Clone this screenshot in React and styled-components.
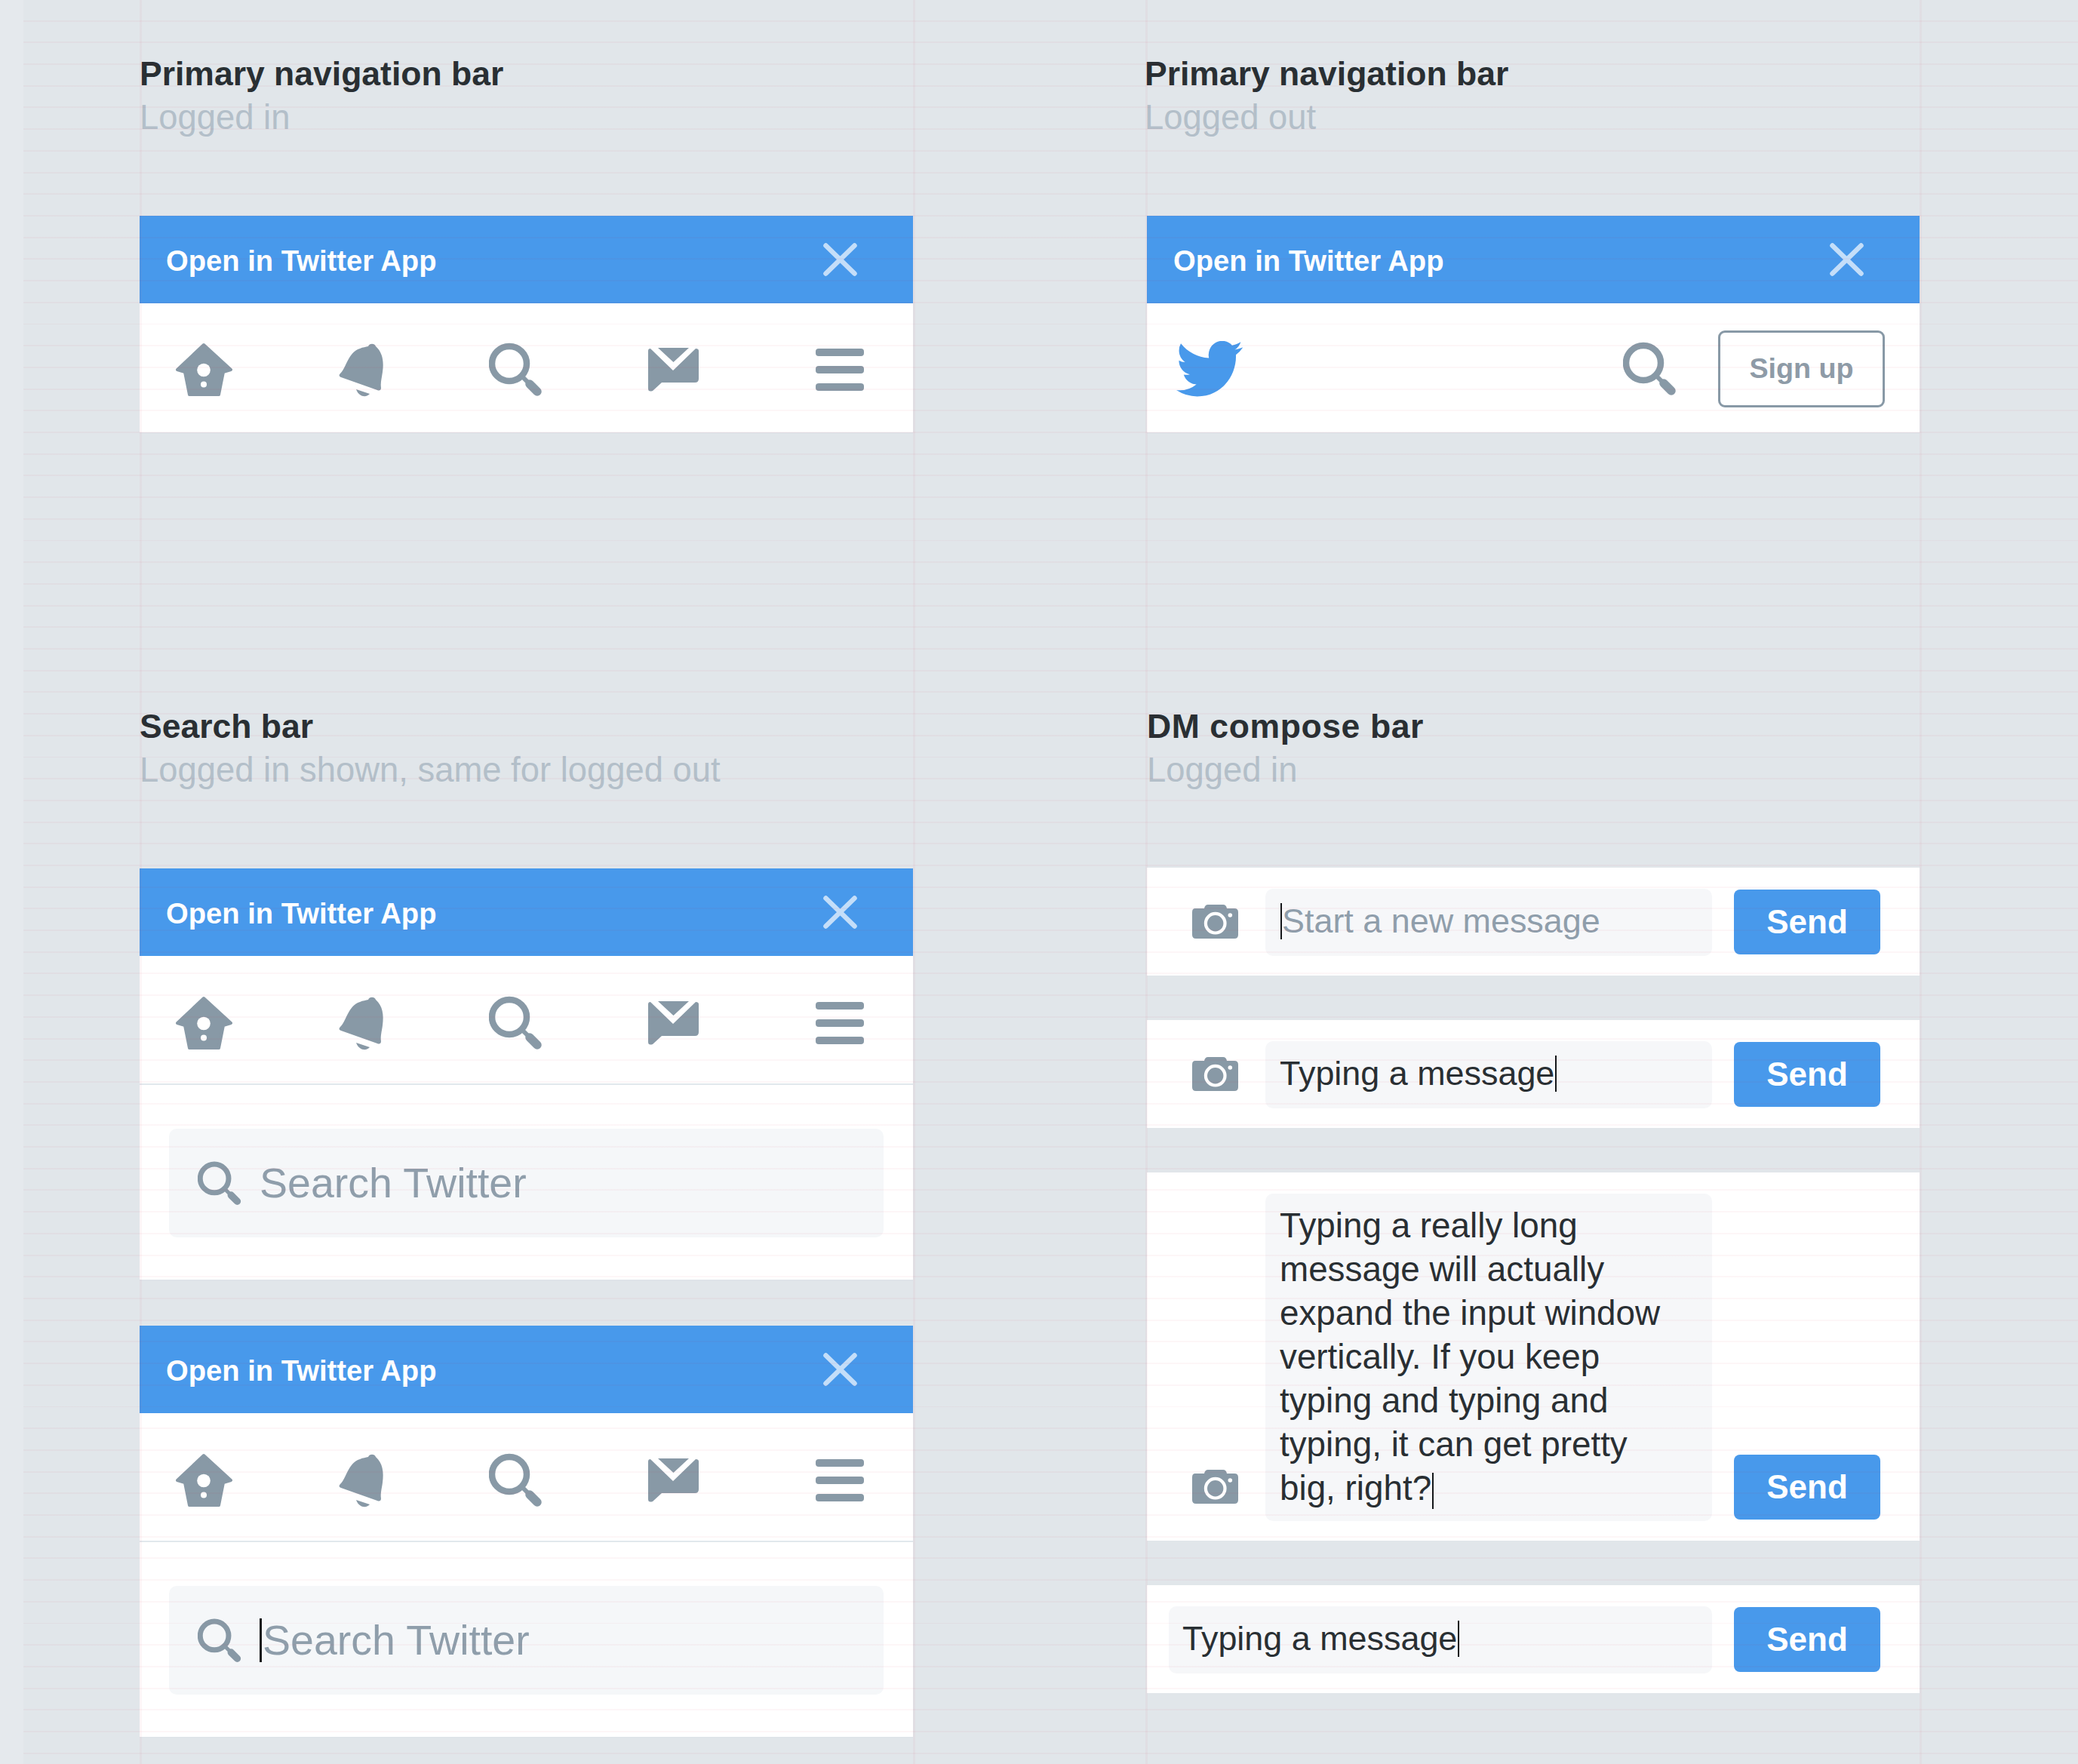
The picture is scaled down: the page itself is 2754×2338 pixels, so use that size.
import React from 'react';
import styled, { createGlobalStyle } from 'styled-components';

const GlobalStyle = createGlobalStyle`
  html, body {
    margin: 0;
    padding: 0;
    background: #e1e6ea;
  }
`;

const HomeIcon = () => (
  <HomeSvg viewBox="7 6 77 73">
    <path
      d="M45 9 L81 42 L71 45 L65 75 L26 75 L20 45 L10 42 Z"
      fill="#8899a6"
      stroke="#8899a6"
      strokeWidth="4"
      strokeLinejoin="round"
    />
    <circle cx="45" cy="42.5" r="8.8" fill="#fff" />
    <circle cx="45" cy="61.5" r="4" fill="#fff" />
  </HomeSvg>
);

const BellIcon = () => (
  <BellSvg viewBox="14 8 60 74">
    <path
      fill="#8899a6"
      d="M16 50 C24 43 26 22 42 17 C46 15 50 15 53 14 A5.5 5.5 0 0 1 63 14 C72 22 74 34 72 48 C71 56 69 62 70 69 C70 73 67 73 65 72 L17 55 C14 54 14 52 16 50 Z"
    />
    <path fill="#8899a6" d="M37 71 L55 77 C51 82 41 82 37 71 Z" />
  </BellSvg>
);

const SearchIcon = ({ size = 72 }) => (
  <SearchSvg $size={size} viewBox="8 7 72 72">
    <circle cx="35" cy="35" r="23" fill="none" stroke="#8899a6" strokeWidth="8.5" />
    <line x1="53" y1="53" x2="61" y2="61" stroke="#8899a6" strokeWidth="6" />
    <line x1="62" y1="62" x2="72" y2="72" stroke="#8899a6" strokeWidth="11.5" strokeLinecap="round" />
  </SearchSvg>
);

const MailIcon = () => (
  <MailSvg viewBox="9 17 67 59">
    <path
      fill="#8899a6"
      d="M9 21 Q9 18 12 18 L42 47 L72 18 Q76 18 76 21 V58 Q76 63 71 63 H27 L15 74 Q9 76 9 71 Z"
    />
    <path fill="#8899a6" d="M22 17 H63 L42.5 36 Z" />
  </MailSvg>
);

const MenuIcon = () => (
  <MenuBars>
    <MenuBar />
    <MenuBar />
    <MenuBar />
  </MenuBars>
);

const CloseIcon = () => (
  <CloseSvg viewBox="0 0 45 44">
    <path
      d="M3.5 3.5 L41.5 40.5 M41.5 3.5 L3.5 40.5"
      stroke="#fff"
      strokeOpacity="0.68"
      strokeWidth="6.5"
      strokeLinecap="round"
    />
  </CloseSvg>
);

const BirdIcon = () => (
  <BirdSvg viewBox="0 2.3 24 19.6" preserveAspectRatio="none">
    <path
      fill="#4899eb"
      d="M23.953 4.57a10 10 0 01-2.825.775 4.958 4.958 0 002.163-2.723c-.951.555-2.005.959-3.127 1.184a4.92 4.92 0 00-8.384 4.482C7.69 8.095 4.067 6.13 1.64 3.162a4.822 4.822 0 00-.666 2.475c0 1.71.87 3.213 2.188 4.096a4.904 4.904 0 01-2.228-.616v.06a4.923 4.923 0 003.946 4.827 4.996 4.996 0 01-2.212.085 4.936 4.936 0 004.604 3.417 9.867 9.867 0 01-6.102 2.105c-.39 0-.779-.023-1.17-.067a13.995 13.995 0 007.557 2.209c9.053 0 13.998-7.496 13.998-13.985 0-.21 0-.42-.015-.63A9.935 9.935 0 0024 4.59z"
    />
  </BirdSvg>
);

const CameraIcon = () => (
  <CameraSvg viewBox="10 18 61 45">
    <path
      fill="#8899a6"
      d="M14 23 H26 Q27 18 31 18 H51 Q55 18 56 23 H66 Q71 23 71 28 V58 Q71 63 66 63 H15 Q10 63 10 58 V28 Q10 23 14 23 Z"
    />
    <circle cx="40.7" cy="42.7" r="12.8" fill="none" stroke="#fff" strokeWidth="4.2" />
    <circle cx="60.3" cy="32" r="2.8" fill="#fff" />
  </CameraSvg>
);

const OpenBanner = () => (
  <Banner>
    <BannerText>Open in Twitter App</BannerText>
    <CloseIcon />
  </Banner>
);

const LoggedInNav = ({ divided }) => (
  <Nav $divided={divided}>
    <HomeIcon />
    <BellIcon />
    <SearchIcon />
    <MailIcon />
    <MenuIcon />
  </Nav>
);

const Heading = ({ title, note, shift, spread }) => (
  <Header $shift={shift}>
    <Title $spread={spread}>{title}</Title>
    <Note>{note}</Note>
  </Header>
);

const SearchPanel = ({ focused }) => (
  <Panel>
    <OpenBanner />
    <LoggedInNav divided />
    <SearchSection>
      <SearchBox>
        <SearchIcon size={59} />
        <SearchText>
          {focused && <SearchCursor />}
          Search Twitter
        </SearchText>
      </SearchBox>
    </SearchSection>
  </Panel>
);

const LONG_MESSAGE = [
  'Typing a really long',
  'message will actually',
  'expand the input window',
  'vertically. If you keep',
  'typing and typing and',
  'typing, it can get pretty',
];

export default function App() {
  return (
    <Page>
      <GlobalStyle />
      <Columns>
        <Section>
          <Heading title="Primary navigation bar" note="Logged in" />
          <Panel>
            <OpenBanner />
            <LoggedInNav />
          </Panel>
        </Section>

        <Section>
          <Heading title="Primary navigation bar" note="Logged out" shift />
          <Panel>
            <OpenBanner />
            <GuestNav>
              <BirdIcon />
              <GuestActions>
                <SearchIcon size={72} />
                <SignUp>Sign up</SignUp>
              </GuestActions>
            </GuestNav>
          </Panel>
        </Section>

        <Section>
          <Heading title="Search bar" note="Logged in shown, same for logged out" />
          <PanelStack>
            <SearchPanel />
            <SearchPanel focused />
          </PanelStack>
        </Section>

        <Section>
          <Heading title="DM compose bar" note="Logged in" spread />
          <ComposeStack>
            <ComposeRow>
              <CameraIcon />
              <MessageInput>
                <Cursor />
                <Placeholder>Start a new message</Placeholder>
              </MessageInput>
              <SendButton>Send</SendButton>
            </ComposeRow>

            <ComposeRow>
              <CameraIcon />
              <MessageInput>
                <span>Typing a message</span>
                <Cursor />
              </MessageInput>
              <SendButton>Send</SendButton>
            </ComposeRow>

            <ComposeRow>
              <CameraIcon />
              <MessageInput $tall>
                <div>
                  {LONG_MESSAGE.map((line) => (
                    <div key={line}>{line}</div>
                  ))}
                  big, right?
                  <Cursor />
                </div>
              </MessageInput>
              <SendButton>Send</SendButton>
            </ComposeRow>

            <ComposeRow $noCamera>
              <MessageInput $wide>
                <span>Typing a message</span>
                <Cursor />
              </MessageInput>
              <SendButton>Send</SendButton>
            </ComposeRow>
          </ComposeStack>
        </Section>
      </Columns>
      <GridOverlay />
    </Page>
  );
}

const Page = styled.div`
  position: relative;
  width: 2754px;
  height: 2338px;
  overflow: hidden;
  box-sizing: border-box;
  padding: 69px 0 0 185px;
  background: linear-gradient(to right, #e5e9ed 31px, #e1e6ea 31px);
  font-family: "Liberation Sans", Arial, sans-serif;
`;

const GridOverlay = styled.div`
  position: absolute;
  top: 0;
  bottom: 0;
  left: 31px;
  right: 0;
  pointer-events: none;
  background-image:
    repeating-linear-gradient(
      to bottom,
      transparent 0,
      transparent 26.7px,
      rgba(200, 0, 40, 0.035) 26.7px,
      rgba(200, 0, 40, 0.035) 28.7px
    ),
    linear-gradient(to right, rgba(200, 0, 40, 0.035), rgba(200, 0, 40, 0.035)),
    linear-gradient(to right, rgba(200, 0, 40, 0.035), rgba(200, 0, 40, 0.035)),
    linear-gradient(to right, rgba(200, 0, 40, 0.035), rgba(200, 0, 40, 0.035)),
    linear-gradient(to right, rgba(200, 0, 40, 0.035), rgba(200, 0, 40, 0.035));
  background-repeat: repeat, no-repeat, no-repeat, no-repeat, no-repeat;
  background-size: auto, 3px 100%, 3px 100%, 3px 100%, 3px 100%;
  background-position: 0 0, 154px 0, 1179px 0, 1487px 0, 2513px 0;
`;

const Columns = styled.div`
  display: grid;
  grid-template-columns: 1025px 1024px;
  column-gap: 310px;
  row-gap: 359px;
  align-items: start;
`;

const Section = styled.section`
  display: flex;
  flex-direction: column;
`;

const PanelStack = styled.div`
  display: flex;
  flex-direction: column;
  gap: 59px;
`;

const ComposeStack = styled.div`
  display: flex;
  flex-direction: column;
  gap: 59px;
  margin-top: -1px;
`;

const Header = styled.header`
  height: 114px;
  margin-bottom: 103px;
  margin-left: ${(p) => (p.$shift ? '-3px' : '0')};
  line-height: 57px;
`;

const Title = styled.div`
  font-size: 44.5px;
  font-weight: 700;
  letter-spacing: ${(p) => (p.$spread ? '0.6px' : '0')};
  color: #292f33;
`;

const Note = styled.div`
  padding-top: 1px;
  font-size: 45.4px;
  color: #b3bfc9;
  white-space: nowrap;
`;

const Panel = styled.div`
  display: flex;
  flex-direction: column;
  background: #fff;
  border-bottom: 2px solid #dfe4e9;
`;

const Banner = styled.div`
  display: flex;
  align-items: center;
  justify-content: space-between;
  height: 116px;
  padding: 0 74px 0 35px;
  background: #4899eb;
`;

const BannerText = styled.div`
  padding-top: 4px;
  font-size: 38.2px;
  font-weight: 700;
  color: #fff;
`;

const CloseSvg = styled.svg`
  width: 45px;
  height: 44px;
  margin-bottom: 1px;
`;

const Nav = styled.nav`
  display: flex;
  align-items: center;
  box-sizing: border-box;
  height: 171px;
  padding: ${(p) => (p.$divided ? '9px' : '5px')} 65px 0 47px;
  gap: 139px;
  border-bottom: ${(p) => (p.$divided ? '2px solid #e1e8ed' : '0')};
`;

const HomeSvg = styled.svg`
  width: 77px;
  height: 73px;
  margin-right: 1px;
`;

const BellSvg = styled.svg`
  width: 60px;
  height: 74px;
`;

const SearchSvg = styled.svg`
  flex: none;
  width: ${(p) => p.$size}px;
  height: ${(p) => p.$size}px;
`;

const MailSvg = styled.svg`
  width: 67px;
  height: 59px;
`;

const MenuBars = styled.div`
  display: flex;
  flex-direction: column;
  gap: 13px;
  width: 64px;
  margin-left: auto;
`;

const MenuBar = styled.div`
  height: 10px;
  border-radius: 4px;
  background: #8899a6;
`;

const GuestNav = styled.nav`
  display: flex;
  align-items: center;
  justify-content: space-between;
  box-sizing: border-box;
  height: 171px;
  padding: 2px 46px 0 39px;
`;

const BirdSvg = styled.svg`
  width: 88px;
  height: 74px;
`;

const GuestActions = styled.div`
  display: flex;
  align-items: center;
  gap: 54px;
`;

const SignUp = styled.div`
  display: flex;
  align-items: center;
  justify-content: center;
  box-sizing: border-box;
  width: 221px;
  height: 102px;
  border: 3px solid #8899a6;
  border-radius: 9px;
  font-size: 37.7px;
  font-weight: 700;
  color: #8e9ba7;
`;

const SearchSection = styled.div`
  padding: 58px 39px 56px;
`;

const SearchBox = styled.div`
  display: flex;
  align-items: center;
  gap: 23px;
  height: 144px;
  padding-left: 38px;
  border-radius: 10px;
  background: #f5f7f9;
`;

const SearchText = styled.div`
  display: flex;
  align-items: center;
  font-size: 55.5px;
  color: #8f9eab;
`;

const SearchCursor = styled.span`
  width: 3px;
  height: 58px;
  margin-right: 1px;
  background: #14171a;
`;

const ComposeRow = styled.div`
  display: flex;
  align-items: flex-end;
  padding: 28px 52px 26px ${(p) => (p.$noCamera ? '29px' : '60px')};
  background: #fff;
`;

const CameraSvg = styled.svg`
  flex: none;
  width: 61px;
  height: 45px;
  margin: 0 36px 23px 0;
`;

const MessageInput = styled.div`
  display: flex;
  align-items: center;
  box-sizing: border-box;
  flex: ${(p) => (p.$wide ? '1' : 'none')};
  width: ${(p) => (p.$wide ? 'auto' : '592px')};
  min-height: 89px;
  padding: ${(p) => (p.$tall ? '14px' : '0')} 0 ${(p) => (p.$tall ? '14px' : '4px')} ${(p) => (p.$wide ? '18px' : '19px')};
  border-radius: 10px;
  background: #f6f7f9;
  font-size: ${(p) => (p.$tall ? '45.8px' : '44.9px')};
  line-height: 58px;
  color: #292f33;
`;

const Placeholder = styled.span`
  color: #8f9eab;
`;

const Cursor = styled.span`
  display: inline-block;
  width: 2px;
  height: 48px;
  margin-left: 1px;
  vertical-align: middle;
  background: #14171a;
`;

const SendButton = styled.div`
  display: flex;
  align-items: center;
  justify-content: center;
  flex: none;
  width: 194px;
  height: 86px;
  margin: 0 0 2px 29px;
  border-radius: 8px;
  background: #4899eb;
  font-size: 44px;
  font-weight: 700;
  color: #fff;
`;
